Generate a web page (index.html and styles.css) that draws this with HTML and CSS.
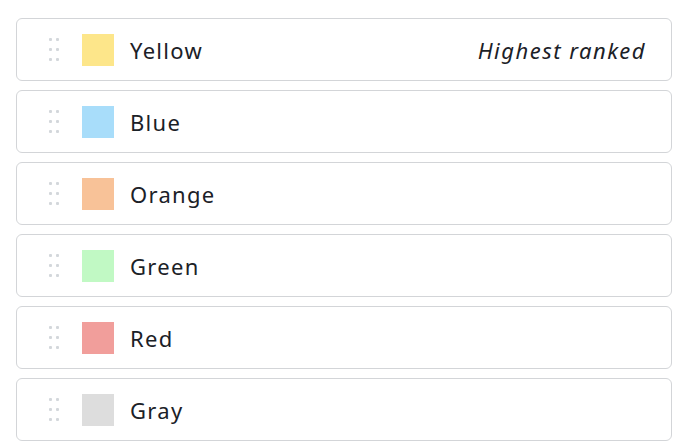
FILE: index.html
```html
<!DOCTYPE html>
<html lang="en">
<head>
  <meta charset="UTF-8" />
  <meta name="viewport" content="width=device-width, initial-scale=1.0"/>
  <title>Rank colors</title>
  <link rel="stylesheet" href="styles.css">
</head>
<body>
  <ul class="rank-list">
    <li class="rank-item">
      <span class="grip"><i></i><i></i><i></i><i></i><i></i><i></i></span>
      <span class="swatch yellow"></span>
      <span class="label">Yellow</span>
      <span class="note">Highest ranked</span>
    </li>
    <li class="rank-item">
      <span class="grip"><i></i><i></i><i></i><i></i><i></i><i></i></span>
      <span class="swatch blue"></span>
      <span class="label">Blue</span>
    </li>
    <li class="rank-item">
      <span class="grip"><i></i><i></i><i></i><i></i><i></i><i></i></span>
      <span class="swatch orange"></span>
      <span class="label">Orange</span>
    </li>
    <li class="rank-item">
      <span class="grip"><i></i><i></i><i></i><i></i><i></i><i></i></span>
      <span class="swatch green"></span>
      <span class="label">Green</span>
    </li>
    <li class="rank-item">
      <span class="grip"><i></i><i></i><i></i><i></i><i></i><i></i></span>
      <span class="swatch red"></span>
      <span class="label">Red</span>
    </li>
    <li class="rank-item">
      <span class="grip"><i></i><i></i><i></i><i></i><i></i><i></i></span>
      <span class="swatch gray"></span>
      <span class="label">Gray</span>
    </li>
  </ul>
</body>
</html>
```

FILE: styles.css
```css
body {
  margin: 0;
  padding: 18px 20px 0 16px;
  font-family: "Noto Sans", "Open Sans", Arial, sans-serif;
  background: #ffffff;
  color: #1b2127;
}

.rank-list {
  list-style: none;
  margin: 0;
  padding: 0;
  display: flex;
  flex-direction: column;
  gap: 9px;
}

.rank-item {
  display: flex;
  align-items: center;
  height: 61px;
  border: 1px solid #d3d5d8;
  border-radius: 6px;
  padding: 0 26px 0 32px;
}

/* drag handle */
.grip {
  display: grid;
  grid-template-columns: 3px 3px;
  grid-auto-rows: 3px;
  column-gap: 4px;
  row-gap: 7px;
  width: 10px;
  margin-right: 23px;
}

.grip i {
  display: block;
  width: 3px;
  height: 3px;
  border-radius: 1px;
  background: #d3d7db;
}

.swatch {
  width: 32px;
  height: 32px;
  flex: none;
  margin-right: 16px;
}

.yellow { background: #fde68a; }
.blue { background: #a8ddfa; }
.orange { background: #f8c298; }
.green { background: #c1f9c4; }
.red { background: #f19e9b; }
.gray { background: #dddddd; }

.label {
  font-size: 22px;
  letter-spacing: 1.3px;
  flex: 1;
}

.note {
  font-size: 22px;
  font-style: italic;
  letter-spacing: 1.5px;
  margin-right: -1px;
}
```
